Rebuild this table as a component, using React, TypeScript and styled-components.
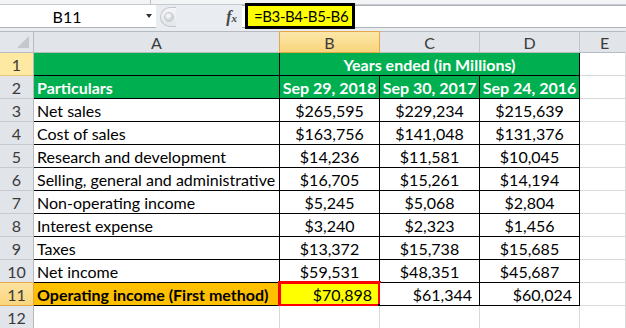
import React from 'react';
import styled, { createGlobalStyle, css } from 'styled-components';

type Align = 'left' | 'center' | 'right';
type Line = 'black' | 'grid';

interface Row {
  label: string;
  values: string[];
}

const rows: Row[] = [
  { label: 'Net sales', values: ['$265,595', '$229,234', '$215,639'] },
  { label: 'Cost of sales', values: ['$163,756', '$141,048', '$131,376'] },
  { label: 'Research and development', values: ['$14,236', '$11,581', '$10,045'] },
  { label: 'Selling, general and administrative', values: ['$16,705', '$15,261', '$14,194'] },
  { label: 'Non-operating income', values: ['$5,245', '$5,068', '$2,804'] },
  { label: 'Interest expense', values: ['$3,240', '$2,323', '$1,456'] },
  { label: 'Taxes', values: ['$13,372', '$15,738', '$15,685'] },
  { label: 'Net income', values: ['$59,531', '$48,351', '$45,687'] },
];

const GREEN = '#00b050';
const FONT = `Lato, 'Liberation Sans', sans-serif`;

const App: React.FC = () => {
  return (
    <Window>
      <GlobalStyle />
      <RibbonEdge>
        <RibbonTick />
      </RibbonEdge>
      <FormulaBar>
        <NameBox>
          <NameText>B11</NameText>
          <DropArrow />
        </NameBox>
        <Splitter>
          <Grip>
            <GripDot />
          </Grip>
          <FxLabel>
            f<small>x</small>
          </FxLabel>
        </Splitter>
        <FormulaInput>
          <FormulaHighlight>=B3-B4-B5-B6</FormulaHighlight>
        </FormulaInput>
      </FormulaBar>

      <Sheet>
        <Corner>
          <CornerTriangle />
        </Corner>
        <ColHead>A</ColHead>
        <ColHead $active>B</ColHead>
        <ColHead>C</ColHead>
        <ColHead>D</ColHead>
        <ColHead $last>E</ColHead>

        <RowHead $tint="pale">1</RowHead>
        <Cell $bg={GREEN} $line="black" />
        <Cell $bg={GREEN} $line="black" $span={3} $bold $color="#fff" $align="center">
          Years ended (in Millions)
        </Cell>
        <Cell $line="grid" />

        <RowHead>2</RowHead>
        <Cell $bg={GREEN} $line="black" $bold $color="#fff">
          Particulars
        </Cell>
        {['Sep 29, 2018', 'Sep 30, 2017', 'Sep 24, 2016'].map((d) => (
          <Cell key={d} $bg={GREEN} $line="black" $bold $color="#fff" $align="center" $tight>
            {d}
          </Cell>
        ))}
        <Cell $line="grid" />

        {rows.map((r, i) => (
          <React.Fragment key={r.label}>
            <RowHead>{i + 3}</RowHead>
            <Cell $line="black">{r.label}</Cell>
            {r.values.map((v, j) => (
              <Cell key={j} $line="black" $align="center">
                {v}
              </Cell>
            ))}
            <Cell $line="grid" />
          </React.Fragment>
        ))}

        <RowHead $tint="active">11</RowHead>
        <Cell $bg="#ffc000" $line="black" $bold>
          Operating income (First method)
        </Cell>
        <Cell $bg="#ffff00" $line="black" $align="right">
          $70,898
          <Selection>
            <FillHandle />
          </Selection>
        </Cell>
        <Cell $line="black" $align="right">
          $61,344
        </Cell>
        <Cell $line="black" $align="right">
          $60,024
        </Cell>
        <Cell $line="grid" />

        <RowHead>12</RowHead>
        <Cell $line="grid" />
        <Cell $line="grid" />
        <Cell $line="grid" />
        <Cell $line="grid" />
        <Cell $line="grid" />
      </Sheet>
    </Window>
  );
};

const GlobalStyle = createGlobalStyle`
  html, body {
    margin: 0;
    padding: 0;
    background: #fff;
  }
  body {
    font-family: ${FONT};
    overflow: hidden;
  }
`;

const Window = styled.div`
  width: 626px;
  height: 328px;
  overflow: hidden;
  background: #e9ecf0;
`;

const RibbonEdge = styled.div`
  height: 4px;
  border-bottom: 1px solid #c5cad1;
  background: #f3f4f6;
  display: flex;
  padding-left: 150px;
`;

const RibbonTick = styled.div`
  width: 1px;
  background: #b9bec5;
`;

const FormulaBar = styled.div`
  display: flex;
  height: 23px;
  margin-bottom: 3px;
`;

const NameBox = styled.div`
  width: 156px;
  background: #fff;
  border-bottom: 1px solid #aeb3ba;
  display: flex;
  align-items: center;
`;

const NameText = styled.span`
  flex: 1;
  text-align: center;
  font-size: 16px;
  color: #000;
  padding-right: 12px;
`;

const DropArrow = styled.span`
  width: 0;
  height: 0;
  border-left: 3px solid transparent;
  border-right: 3px solid transparent;
  border-top: 4px solid #333;
  margin-right: 4px;
`;

const Splitter = styled.div`
  width: 86px;
  display: flex;
  align-items: center;
  justify-content: space-between;
  background: #e9ecf0;
`;

const Grip = styled.div`
  width: 16px;
  height: 20px;
  margin-left: 4px;
  border: 1px solid #c3c7cd;
  border-right: none;
  border-radius: 10px 0 0 10px;
  background: linear-gradient(#f4f5f7, #e2e5e9);
  display: flex;
  align-items: center;
  padding-left: 3px;
  box-sizing: border-box;
`;

const GripDot = styled.span`
  width: 8px;
  height: 8px;
  border-radius: 50%;
  background: radial-gradient(circle at 40% 35%, #fff, #b5b9bf);
  border: 1px solid #c6cad0;
`;

const FxLabel = styled.span`
  font-family: 'Liberation Serif', serif;
  font-style: italic;
  font-weight: bold;
  font-size: 16px;
  color: #444;
  margin-right: 5px;
  small {
    font-size: 11px;
  }
`;

const FormulaInput = styled.div`
  flex: 1;
  background: #fff;
  border-top: 1px solid #aeb3ba;
  border-bottom: 1px solid #aeb3ba;
  position: relative;
`;

const FormulaHighlight = styled.div`
  position: absolute;
  left: 3px;
  top: -3px;
  height: 26px;
  box-sizing: border-box;
  border: 3px solid #000;
  background: #ffff00;
  font-size: 15px;
  letter-spacing: -0.4px;
  color: #000;
  white-space: nowrap;
  display: flex;
  align-items: center;
  padding: 0 4px 0 6px;
`;

const Sheet = styled.div`
  display: grid;
  grid-template-columns: 34px 246px 100px 100px 100px 1fr;
  grid-template-rows: 22px;
  grid-auto-rows: 23px;
  background: #fff;
`;

const headerBase = css`
  box-sizing: border-box;
  display: flex;
  align-items: center;
  justify-content: center;
  font-size: 16px;
  color: #3a3a3a;
`;

const Corner = styled.div`
  ${headerBase};
  background: #e3e6ea;
  border-right: 1px solid #b7bbc1;
  border-bottom: 1px solid #b7bbc1;
  border-top: 1px solid #b7bbc1;
  position: relative;
`;

const CornerTriangle = styled.span`
  position: absolute;
  right: 4px;
  bottom: 4px;
  width: 0;
  height: 0;
  border-left: 12px solid transparent;
  border-bottom: 12px solid #c4c8ce;
`;

const ColHead = styled.div<{ $active?: boolean; $last?: boolean }>`
  ${headerBase};
  border-top: 1px solid #b7bbc1;
  border-right: 1px solid ${({ $last }) => ($last ? 'transparent' : '#c1c5cb')};
  border-bottom: 1px solid #b7bbc1;
  background: #e1e4e9;
  ${({ $active }) =>
    $active &&
    css`
      background: linear-gradient(#fbe7a9, #f9d57c);
      border-right-color: #e6a847;
      border-left: 1px solid #e6a847;
      margin-left: -1px;
      border-bottom-color: #e6a847;
      border-top-color: #e6a847;
    `}
  ${({ $last }) =>
    $last &&
    css`
      justify-content: flex-start;
      padding-left: 20px;
    `}
`;

const RowHead = styled.div<{ $tint?: 'pale' | 'active' }>`
  ${headerBase};
  background: #e1e4e9;
  border-right: 1px solid #b7bbc1;
  border-bottom: 1px solid #c6cad0;
  ${({ $tint }) =>
    $tint === 'pale' &&
    css`
      background: #fde9a2;
      border-bottom-color: #e9c77a;
    `}
  ${({ $tint }) =>
    $tint === 'active' &&
    css`
      background: linear-gradient(#fde3a0, #f9d67e);
      border-right-color: #e6a847;
      border-bottom-color: #e6a847;
      border-top: 1px solid #e6a847;
      margin-top: -1px;
    `}
`;

const Cell = styled.div<{
  $bg?: string;
  $line: Line;
  $span?: number;
  $bold?: boolean;
  $color?: string;
  $align?: Align;
  $tight?: boolean;
}>`
  box-sizing: border-box;
  position: relative;
  display: flex;
  align-items: center;
  white-space: nowrap;
  font-size: 16px;
  padding: 0 ${({ $align, $tight }) => ($tight ? '0' : $align === 'right' ? '7px' : '3px')};
  grid-column: span ${({ $span }) => $span ?? 1};
  justify-content: ${({ $align }) =>
    $align === 'center' ? 'center' : $align === 'right' ? 'flex-end' : 'flex-start'};
  background: ${({ $bg }) => $bg ?? '#fff'};
  color: ${({ $color }) => $color ?? '#000'};
  font-weight: ${({ $bold }) => ($bold ? 700 : 400)};
  border-right: 1px solid ${({ $line }) => ($line === 'black' ? '#000' : '#d9d9d9')};
  border-bottom: 1px solid ${({ $line }) => ($line === 'black' ? '#000' : '#d9d9d9')};
`;

const Selection = styled.div`
  position: absolute;
  left: -2px;
  top: -2px;
  right: -2px;
  bottom: -2px;
  border: 3px solid #ff0000;
  pointer-events: none;
`;

const FillHandle = styled.span`
  position: absolute;
  right: -4px;
  bottom: -4px;
  width: 4px;
  height: 4px;
  background: #000;
`;

export default App;
